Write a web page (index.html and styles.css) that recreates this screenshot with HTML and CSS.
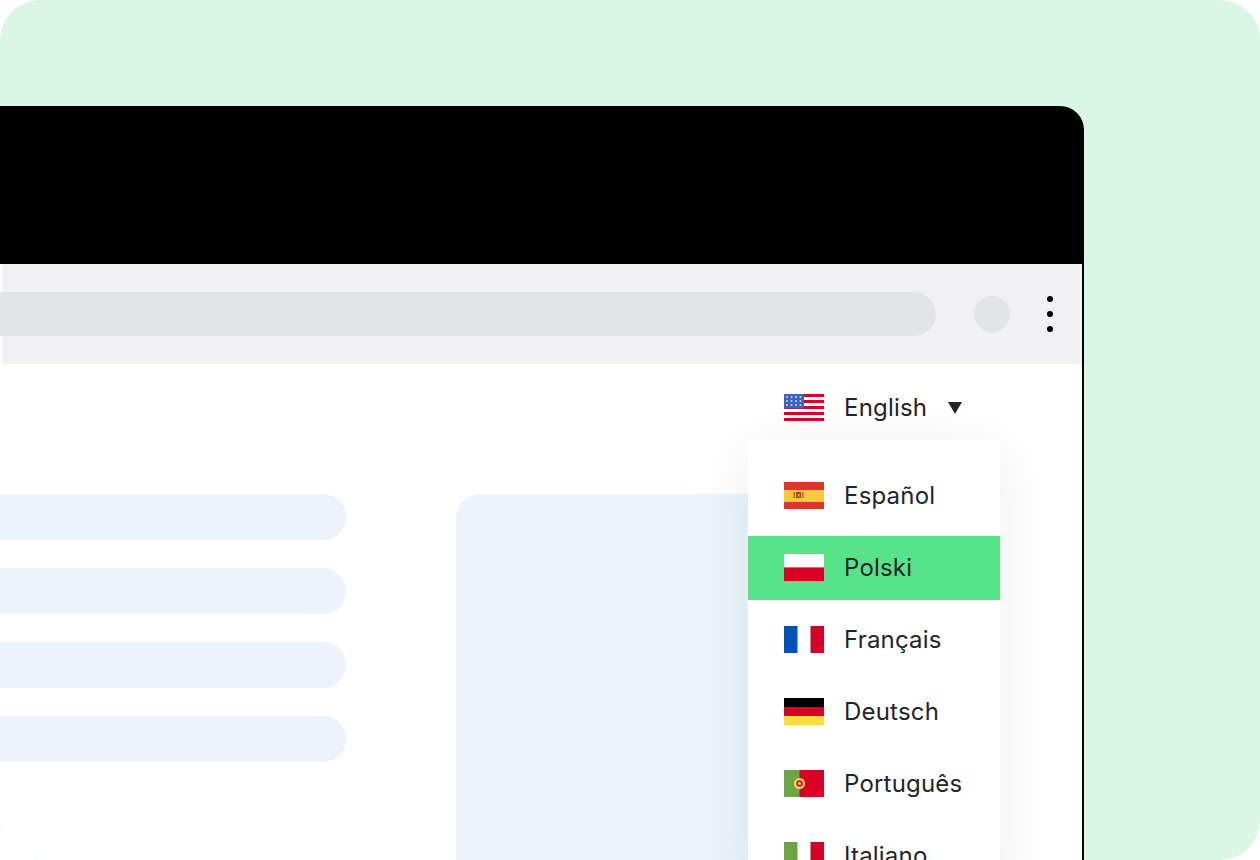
FILE: index.html
```html
<!DOCTYPE html>
<html lang="en">
<head>
    <meta charset="UTF-8">
    <meta name="viewport" content="width=device-width, initial-scale=1.0">
    <title>Language switcher</title>
    <link rel="stylesheet" href="styles.css">
</head>
<body>

<div class="panel">
    <div class="window">
        <div class="window-top"></div>

        <div class="window-body">
            <!-- Browser toolbar -->
            <div class="toolbar">
                <div class="address"></div>
                <div class="avatar"></div>
                <div class="dots"><span></span><span></span><span></span></div>
            </div>

            <div class="page">
                <div class="page-head">
                    <div class="lang">
                        <div class="lang-current">
                            <svg class="flag" viewBox="0 0 40 27">
                                <rect width="40" height="27" fill="#fff"/>
                                <path d="M0 0h40v3H0zM0 6h40v3H0zM0 12h40v3H0zM0 18h40v3H0zM0 24h40v3H0z" fill="#d80027"/>
                                <rect width="20" height="14.500" fill="#3f62c4"/>
                                <g fill="#c9d6f5">
                                    <circle cx="3" cy="3" r="1"/><circle cx="7.500" cy="3" r="1"/><circle cx="12" cy="3" r="1"/><circle cx="16.500" cy="3" r="1"/>
                                    <circle cx="3" cy="7" r="1"/><circle cx="7.500" cy="7" r="1"/><circle cx="12" cy="7" r="1"/><circle cx="16.500" cy="7" r="1"/>
                                    <circle cx="3" cy="11" r="1"/><circle cx="7.500" cy="11" r="1"/><circle cx="12" cy="11" r="1"/><circle cx="16.500" cy="11" r="1"/>
                                </g>
                            </svg>
                            <span class="lang-name">English</span>
                            <span class="caret"></span>
                        </div>

                        <!-- Dropdown -->
                        <ul class="menu">
                            <li class="item">
                                <svg class="flag" viewBox="0 0 40 27">
                                    <rect width="40" height="27" fill="#d8392b"/>
                                    <rect y="8" width="40" height="12" fill="#ffc843"/>
                                    <path d="M9.500 10h1.200v6H9.500zM18.300 10h1.200v6h-1.200zM12 10h5v6h-5z" fill="#b5421f"/>
                                    <rect x="14" y="12" width="1.500" height="2.500" fill="#ffc843"/>
                                </svg>
                                <span>Español</span>
                            </li>
                            <li class="item active">
                                <svg class="flag" viewBox="0 0 40 27">
                                    <rect width="40" height="13.500" fill="#fff"/>
                                    <rect y="13.500" width="40" height="13.500" fill="#d80027"/>
                                </svg>
                                <span>Polski</span>
                            </li>
                            <li class="item">
                                <svg class="flag" viewBox="0 0 40 27">
                                    <rect width="13.500" height="27" fill="#0052b4"/>
                                    <rect x="26.500" width="13.500" height="27" fill="#d80027"/>
                                </svg>
                                <span>Français</span>
                            </li>
                            <li class="item">
                                <svg class="flag" viewBox="0 0 40 27">
                                    <rect width="40" height="9" fill="#000"/>
                                    <rect y="9" width="40" height="9" fill="#d80027"/>
                                    <rect y="18" width="40" height="9" fill="#ffda44"/>
                                </svg>
                                <span>Deutsch</span>
                            </li>
                            <li class="item">
                                <svg class="flag" viewBox="0 0 40 27">
                                    <rect width="40" height="27" fill="#d80027"/>
                                    <rect width="15.500" height="27" fill="#6da544"/>
                                    <circle cx="15.500" cy="13.500" r="5.500" fill="#ffda44"/>
                                    <circle cx="15.500" cy="13.500" r="3.200" fill="#d80027"/>
                                    <circle cx="15.500" cy="13.500" r="1.500" fill="#f3f3f3"/>
                                </svg>
                                <span>Português</span>
                            </li>
                            <li class="item">
                                <svg class="flag" viewBox="0 0 40 27">
                                    <rect width="13.500" height="27" fill="#6da544"/>
                                    <rect x="26.500" width="13.500" height="27" fill="#d80027"/>
                                </svg>
                                <span>Italiano</span>
                            </li>
                        </ul>
                    </div>
                </div>

                <div class="page-body">
                    <div class="lines">
                        <div class="line"></div>
                        <div class="line"></div>
                        <div class="line"></div>
                        <div class="line"></div>
                    </div>
                    <div class="card"></div>
                </div>
            </div>
        </div>
    </div>
</div>

</body>
</html>
```

FILE: styles.css
```css
body, html {
    margin: 0;
    padding: 0;
    height: 860px;
    overflow: hidden;
    background-color: #fff;
    font-family: Inter, "Liberation Sans", sans-serif;
}

/* Green backdrop */
.panel {
    box-sizing: border-box;
    height: 860px;
    padding: 106px 176px 0 0;
    background-color: #daf7e5;
    border-radius: 40px;
    overflow: hidden;
}

/* Browser window */
.window {
    height: 754px;
    overflow: hidden;
}

.window-top {
    height: 158px;
    background-color: #000;
    border-radius: 0 24px 0 0;
}

.window-body {
    height: 596px;
    border-right: 2px solid #000;
    background-color: #fff;
    overflow: hidden;
}

.toolbar {
    display: flex;
    align-items: center;
    height: 100px;
    margin-left: 2px;
    background-color: #f1f1f4;
}

.address {
    flex: 1;
    height: 44px;
    margin-left: -2px;
    background-color: #e3e4e8;
    border-radius: 0 22px 22px 0;
}

.avatar {
    width: 36px;
    height: 36px;
    margin-left: 38px;
    background-color: #e3e4e8;
    border-radius: 50%;
}

.dots {
    display: flex;
    flex-direction: column;
    gap: 9px;
    margin: 0 29px 0 37px;
}

.dots span {
    width: 6px;
    height: 6px;
    background-color: #000;
    border-radius: 50%;
}

/* Page content */
.page-head {
    display: flex;
    justify-content: flex-end;
    height: 130px;
    padding-right: 82px;
}

.lang {
    position: relative;
    width: 252px;
}

.lang-current {
    display: flex;
    align-items: center;
    padding: 29px 36px 20px;
    color: #212529;
    font-size: 24px;
    letter-spacing: 0.2px;
}

.flag {
    flex: none;
    display: block;
    width: 40px;
    height: 27px;
}

.lang-name {
    margin-left: 20px;
}

.caret {
    width: 0;
    height: 0;
    margin-left: 21px;
    border-left: 7px solid transparent;
    border-right: 7px solid transparent;
    border-top: 12px solid #212529;
}

.menu {
    position: absolute;
    top: 76px;
    left: 0;
    right: 0;
    display: flex;
    flex-direction: column;
    gap: 8px;
    margin: 0;
    padding: 24px 0 0;
    list-style: none;
    background-color: #fff;
    box-shadow: 0 10px 60px rgba(0, 0, 0, 0.07);
    color: #212529;
    font-size: 24px;
    letter-spacing: 0.2px;
}

.item {
    box-sizing: border-box;
    display: flex;
    align-items: center;
    gap: 20px;
    height: 64px;
    padding: 0 36px 2px;
}

.item.active {
    background-color: #57e389;
}

.page-body {
    display: flex;
    align-items: flex-start;
    gap: 110px;
}

.lines {
    display: flex;
    flex-direction: column;
    gap: 28px;
    width: 346px;
}

.line {
    height: 46px;
    background-color: #ebf3fd;
    border-radius: 0 23px 23px 0;
}

.card {
    width: 500px;
    height: 500px;
    background-color: #ebf3fd;
    border-radius: 24px;
}
```
